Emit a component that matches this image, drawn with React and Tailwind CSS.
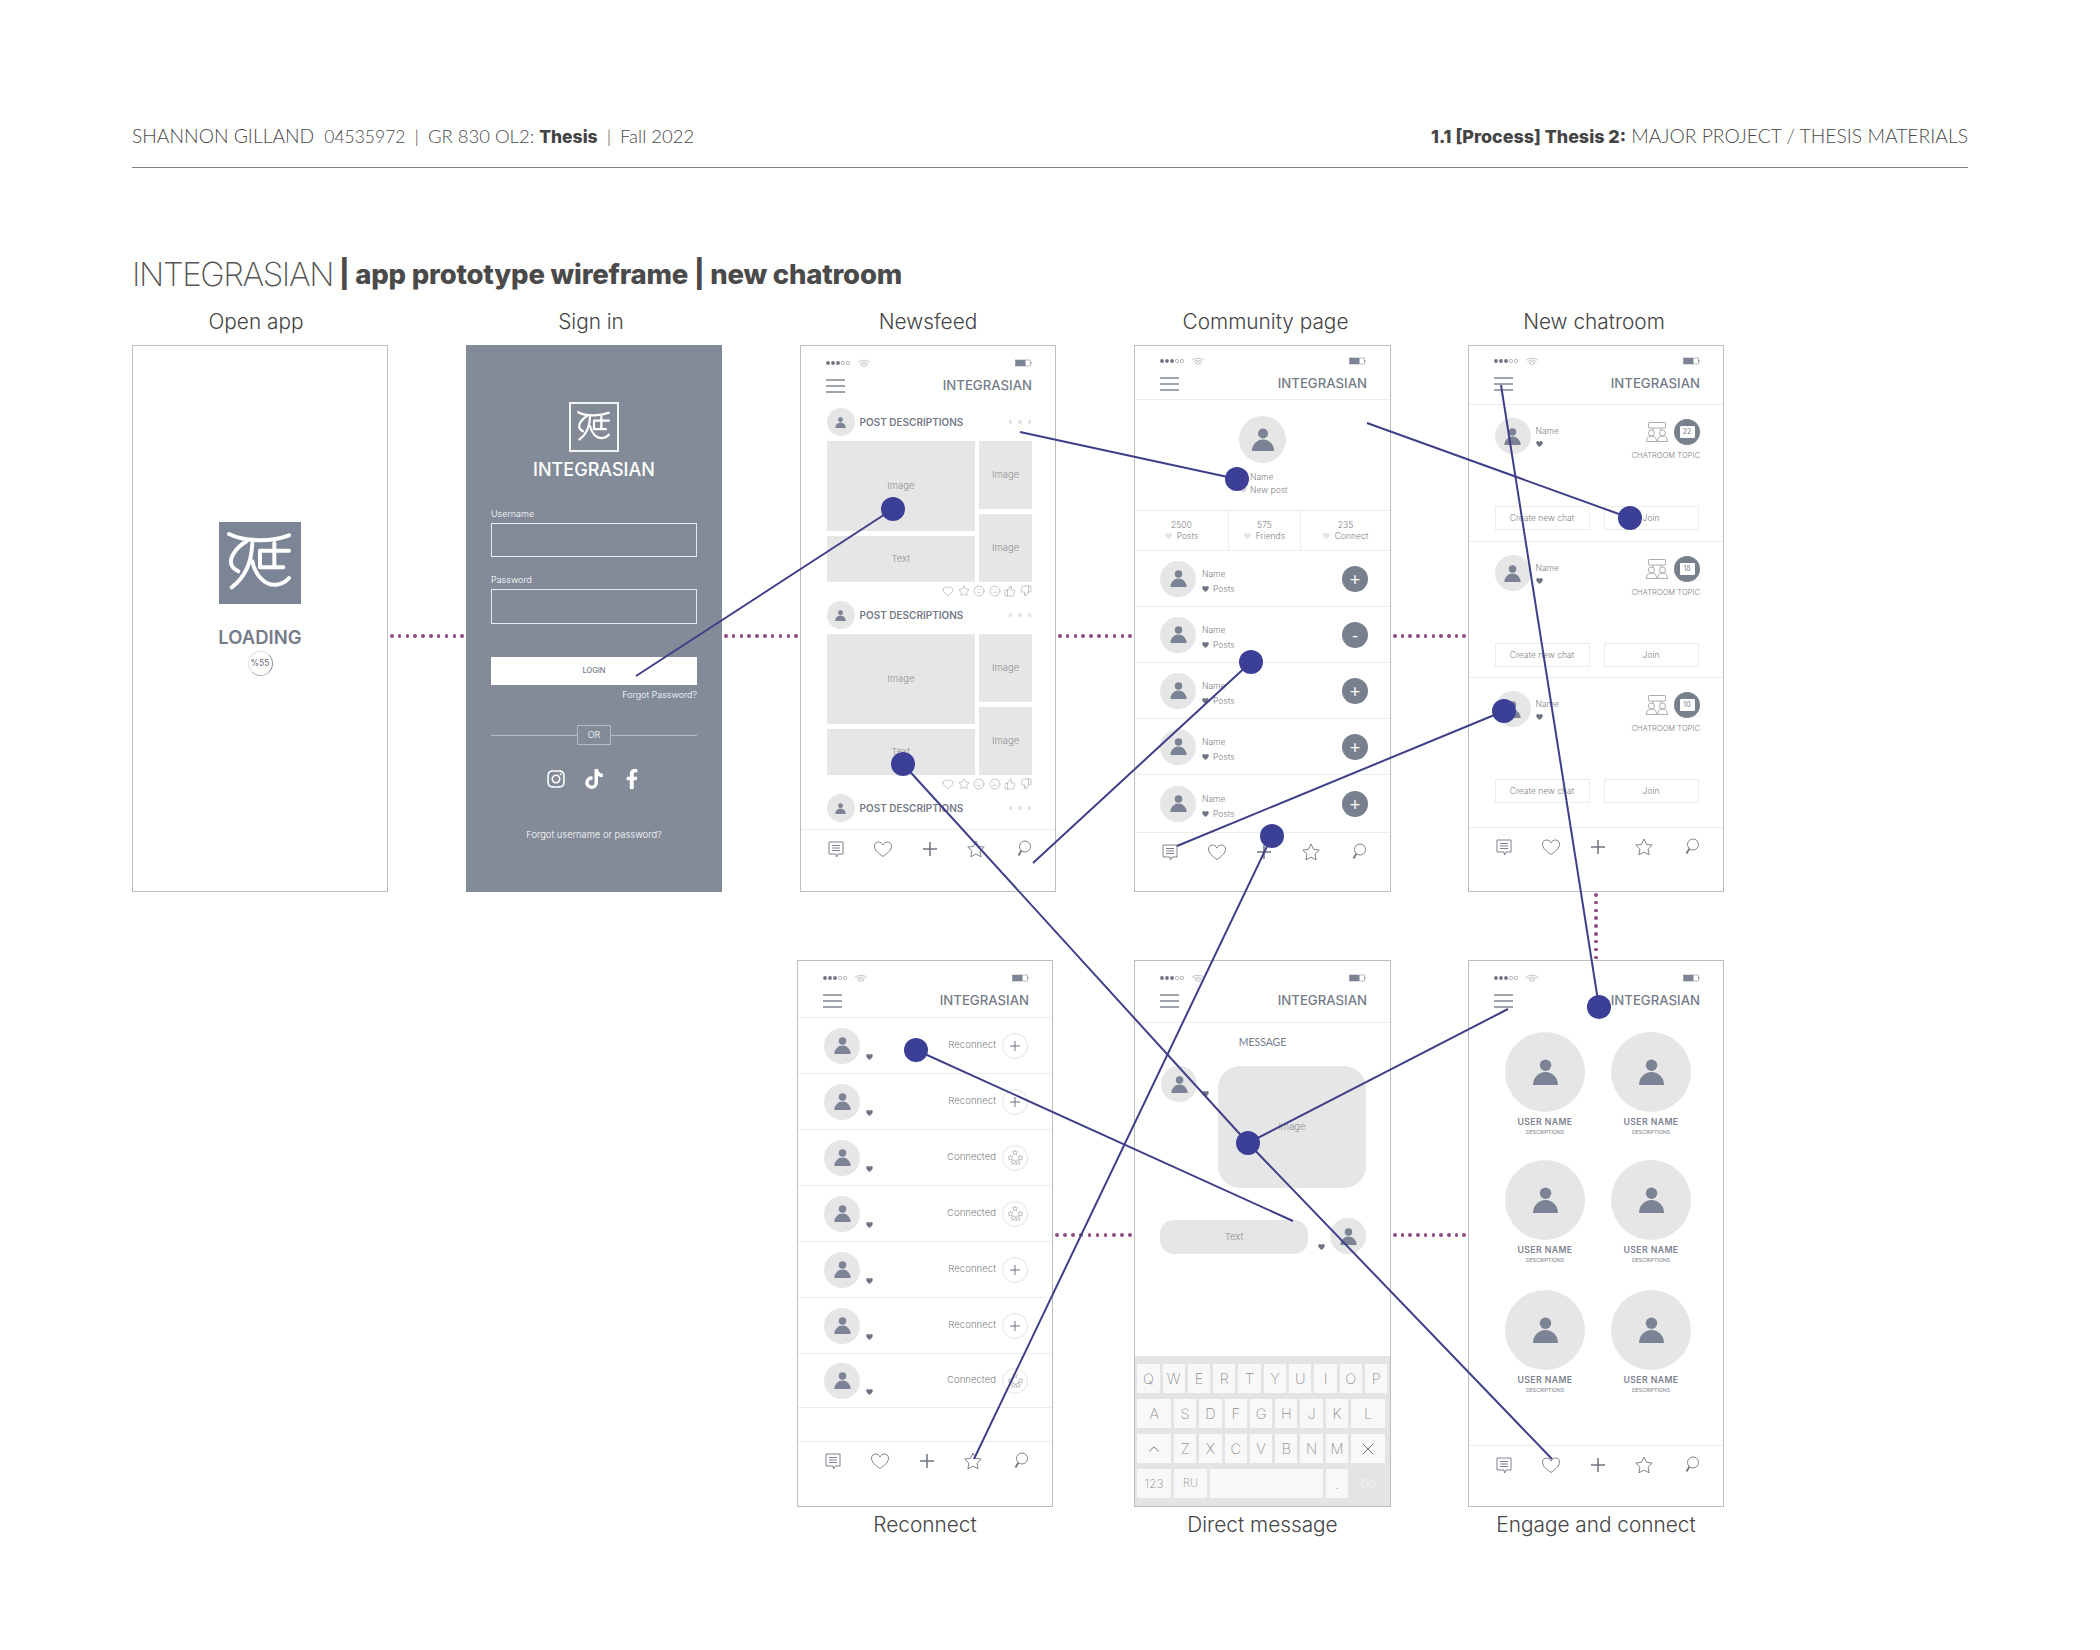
import React from "react";
import { Heart, Star, Smile, Frown, ThumbsUp, ThumbsDown, ChevronUp, X } from "lucide-react";
import { FaInstagram, FaTiktok, FaFacebookF } from "react-icons/fa";

const Glyph = ({ color = "#fff", className = "", sw = 12 }) => (
  <svg viewBox="12 12 246 246" className={className} fill="none" stroke={color} strokeWidth={sw} strokeLinecap="round" strokeLinejoin="round">
    <path d="M42 48C90 72 170 72 222 52" />
    <path d="M95 70C60 90 45 120 48 135C50 148 60 155 70 160" />
    <path d="M112 75C110 130 95 175 50 208" />
    <path d="M112 130C120 170 150 205 185 200C200 198 212 192 222 180" />
    <path d="M135 98H222M135 98V148H205M178 75V148" />
  </svg>
);

const Person = ({ className = "", fill = "#7b8394" }) => (
  <svg viewBox="0 0 24 25" className={className} fill={fill}>
    <circle cx="12" cy="6" r="5.5" />
    <path d="M0 25a12 12.5 0 0 1 24 0z" />
  </svg>
);

const Avatar = ({ box, icon }) => (
  <div className={`${box} shrink-0 rounded-full bg-[#e6e6e6] flex items-center justify-center`}>
    <Person className={icon} />
  </div>
);

const Burger = () => (
  <div className="w-[19px] flex flex-col gap-[4.5px]">
    <div className="h-[1.5px] bg-[#a0a4ab]" />
    <div className="h-[1.5px] bg-[#a0a4ab]" />
    <div className="h-[1.5px] bg-[#a0a4ab]" />
  </div>
);

const Status = () => (
  <svg width="206" height="8" viewBox="0 0 206 8" fill="none">
    <circle cx="2" cy="4" r="1.9" fill="#6f7480" />
    <circle cx="7" cy="4" r="1.9" fill="#6f7480" />
    <circle cx="12" cy="4" r="1.9" fill="#6f7480" />
    <circle cx="17" cy="4" r="1.7" stroke="#8a8f98" strokeWidth=".6" />
    <circle cx="22" cy="4" r="1.7" stroke="#8a8f98" strokeWidth=".6" />
    <path d="M32 3Q38 -.5 44 3M33.5 4.5Q38 1.5 42.5 4.5M35 6Q38 3.5 41 6L38 8z" stroke="#a0a4ab" strokeWidth=".6" />
    <rect x="189.5" y="1" width="15" height="6" stroke="#8a8f98" strokeWidth=".6" />
    <rect x="189.5" y="1" width="10" height="6" fill="#7b8394" />
    <path d="M205 3v2" stroke="#8a8f98" />
  </svg>
);

const Header = ({ className }) => (
  <div className={`${className} shrink-0 pl-[25px] pr-[23px] flex flex-col`}>
    <div className="h-[12px] flex items-center"><Status /></div>
    <div className="mt-[9px] h-[16px] flex items-center justify-between">
      <Burger />
      <span className="font-['Inter'] font-medium text-[13.2px] text-[#757c88]">INTEGRASIAN</span>
    </div>
  </div>
);

const Nav = ({ className }) => (
  <div className={`${className} mt-auto shrink-0 border-t-[1.5px] border-[#ececec] pl-[25px] pr-[22px] pt-[9px] flex items-start justify-between`}>
    <svg width="20" height="20" viewBox="0 0 20 20" fill="none" stroke="#6f7480" strokeWidth=".9" strokeLinejoin="round">
      <path d="M3 3h14v12h-5l-1.5 3-.5-3H3z" />
      <path d="M6 6.5h8M6 9h8M6 11.5h8" />
    </svg>
    <svg width="20" height="20" viewBox="0 0 20 20" fill="none" stroke="#6f7480" strokeWidth=".9" strokeLinejoin="round">
      <path d="M10 17.5C5 14 1.500 11 1.500 7C1.500 4.500 3.500 3 5.500 3C7.500 3 9 4 10 6C11 4 12.500 3 14.500 3C16.500 3 18.500 4.500 18.500 7C18.500 11 15 14 10 17.500z" />
    </svg>
    <svg width="20" height="20" viewBox="0 0 20 20" fill="none" stroke="#6f7480" strokeWidth="1.500">
      <path d="M10 3v14M3 10h14" />
    </svg>
    <svg width="20" height="20" viewBox="0 0 20 20" fill="none" stroke="#6f7480" strokeWidth=".9" strokeLinejoin="round">
      <path d="M10 2l2.500 5.300 5.700.8-4.100 4 1 5.700-5.100-2.700-5.100 2.700 1-5.700-4.100-4 5.700-.8z" />
    </svg>
    <svg width="20" height="20" viewBox="0 0 20 20" fill="none" stroke="#6f7480">
      <circle cx="12" cy="7.500" r="5.500" strokeWidth=".9" />
      <path d="M8.300 11.800L5.500 16.500" strokeWidth="1.800" />
    </svg>
  </div>
);

const Phone = ({ children }) => (
  <div className="w-full h-[547px] border border-[#bdbdbd] bg-white flex flex-col overflow-hidden">{children}</div>
);

const Column = ({ label, children, below, labelClass = "", width = "w-[256px]" }) => (
  <div className={`${width} shrink-0 flex flex-col`}>
    {!below && <div className={`h-[24px] mb-[11px] -mt-[1px] flex items-center justify-center font-['Inter'] font-light text-[20.800px] text-[#444] ${labelClass}`}>{label}</div>}
    {children}
    {below && <div className={`h-[24px] mt-[6px] flex items-center justify-center font-['Inter'] font-light text-[20.800px] text-[#444] ${labelClass}`}>{label}</div>}
  </div>
);

const Dots = ({ width, count, top }) => (
  <div className={`${width} ${top} shrink-0 self-start h-[4px] px-[2px] flex items-center justify-between`}>
    {Array.from({ length: count }).map((_, i) => (
      <span key={i} className="w-[3.5px] h-[3.5px] rounded-full bg-[#8f4a80]" />
    ))}
  </div>
);

const Img = ({ className, label }) => (
  <div className={`${className} bg-[#e6e6e6] flex items-center justify-center font-['Inter'] font-light text-[9.5px] text-[#909090]`}>{label}</div>
);

const PostHead = () => (
  <div className="h-[28px] flex items-center">
    <Avatar box="w-[28px] h-[28px]" icon="w-[11px] h-[11px]" />
    <span className="ml-[5px] font-['Inter'] font-semibold text-[10px] text-[#747b87]">POST DESCRIPTIONS</span>
    <div className="ml-auto flex gap-[6px] pr-[1px]">
      <i className="w-[3.5px] h-[3.5px] rounded-full bg-[#e2e2e2]" />
      <i className="w-[3.5px] h-[3.5px] rounded-full bg-[#e2e2e2]" />
      <i className="w-[3.5px] h-[3.5px] rounded-full bg-[#e2e2e2]" />
    </div>
  </div>
);

const Post = ({ first }) => (
  <div className={first ? "mt-[14px]" : "mt-[4px]"}>
    <PostHead />
    <div className="mt-[5px] flex gap-[4px]">
      <div className="w-[149px] flex flex-col gap-[5px]">
        <Img className="h-[90px]" label="Image" />
        <Img className="h-[46px]" label="Text" />
      </div>
      <div className="w-[53px] flex flex-col gap-[5px]">
        <Img className="h-[68px]" label="Image" />
        <Img className="h-[68px]" label="Image" />
      </div>
    </div>
    <div className="mt-[3px] h-[12px] flex justify-end gap-[3.600px] text-[#8f8f8f]">
      <Heart size={12} strokeWidth={1} />
      <Star size={12} strokeWidth={1} />
      <Smile size={12} strokeWidth={1} />
      <Frown size={12} strokeWidth={1} />
      <ThumbsUp size={12} strokeWidth={1} />
      <ThumbsDown size={12} strokeWidth={1} />
    </div>
  </div>
);

const TinyHeart = ({ className = "", color = "#6f7480" }) => (
  <svg viewBox="0 0 12 11" className={`w-[7px] h-[6px] shrink-0 ${className}`} fill={color}>
    <path d="M6 11C2 8 0 6 0 3.300C0 1.300 1.500 0 3.200 0C4.400 0 5.400.6 6 1.800C6.600.6 7.600 0 8.800 0C10.500 0 12 1.300 12 3.300C12 6 10 8 6 11z" />
  </svg>
);

const Stat = ({ n, label, className }) => (
  <div className={`${className} h-full flex flex-col items-center justify-center font-['Inter'] font-light text-[8.500px] leading-[11px] text-[#7f7f7f]`}>
    <span>{n}</span>
    <span className="flex items-center gap-[5px]"><TinyHeart color="#e3e3e3" />{label}</span>
  </div>
);

const FriendRow = ({ sign, className }) => (
  <div className={`${className} shrink-0 pl-[25px] pr-[22px] flex items-center`}>
    <Avatar box="w-[36px] h-[36px]" icon="w-[17px] h-[17px]" />
    <div className="ml-[6px] pt-[6px] flex flex-col gap-[4px] font-['Inter'] font-light text-[8.500px] leading-[11px] text-[#7f7f7f]">
      <span>Name</span>
      <span className="flex items-center gap-[4px]"><TinyHeart />Posts</span>
    </div>
    <div className="ml-auto w-[26px] h-[26px] rounded-full bg-[#78808e] flex items-center justify-center text-white font-['Lato'] text-[18px] leading-none">{sign}</div>
  </div>
);

const Group = () => (
  <svg width="22" height="20" viewBox="0 0 22 20" fill="none" stroke="#8a8a8a" strokeWidth=".7">
    <rect x="2.500" y=".5" width="17" height="5.500" rx=".8" />
    <path d="M7 6v2M15 6v2" />
    <circle cx="5.500" cy="11" r="3" />
    <circle cx="16.500" cy="11" r="3" />
    <path d="M.5 19.500q0-5.500 5-5.500t5 5.500zM11.500 19.500q0-5.500 5-5.500t5 5.500z" />
  </svg>
);

const ChatRow = ({ n, className }) => (
  <div className={`${className} shrink-0 pl-[25.500px] pr-[23px] pt-[13px]`}>
    <div className="h-[88px] flex">
      <Avatar box="w-[36px] h-[36px]" icon="w-[17px] h-[17px]" />
      <div className="ml-[5px] pt-[8px] flex flex-col gap-[4px] font-['Inter'] font-light text-[8.500px] leading-[11px] text-[#7f7f7f]">
        <span>Name</span>
        <TinyHeart />
      </div>
      <div className="ml-auto pt-[1px] flex flex-col items-end">
        <div className="flex items-center gap-[6px]">
          <Group />
          <div className="relative w-[26px] h-[26px] rounded-full bg-[#78808e] flex items-center justify-center">
            <span className="w-[15px] h-[12px] rounded-[1px] bg-white flex items-center justify-center font-['Inter'] text-[7px] text-[#78808e]">{n}</span>
          </div>
        </div>
        <span className="mt-[6px] font-['Inter'] font-light text-[7.600px] leading-[10px] text-[#7f7f7f]">CHATROOM TOPIC</span>
      </div>
    </div>
    <div className="flex gap-[14px] font-['Inter'] font-light text-[8.500px] text-[#7f7f7f]">
      <div className="w-[95px] h-[24px] border border-[#ececec] flex items-center justify-center">Create new chat</div>
      <div className="w-[95px] h-[24px] border border-[#ececec] flex items-center justify-center">Join</div>
    </div>
  </div>
);

const MiniStar = ({ x, y }) => (
  <path transform={`translate(${x} ${y})`} d="M2.500 0l.7 1.600 1.800.2-1.300 1.200.4 1.800-1.600-.9-1.600.9.4-1.800L0 1.800l1.800-.2z" />
);

const Stars = () => (
  <svg width="17" height="15" viewBox="0 0 17 15" fill="none" stroke="#8d8d8d" strokeWidth=".5">
    <MiniStar x={5.500} y={0} />
    <MiniStar x={1} y={5} />
    <MiniStar x={11} y={5} />
    <MiniStar x={4} y={9.500} />
    <MiniStar x={8.500} y={9.500} />
  </svg>
);

const ReconnectRow = ({ label, connected, className }) => (
  <div className={`${className} shrink-0 pl-[26px] pr-[24px] flex items-center`}>
    <Avatar box="w-[36px] h-[36px]" icon="w-[17px] h-[17px]" />
    <TinyHeart className="ml-[6px] mt-[22px]" />
    <span className="ml-auto font-['Inter'] font-light text-[9.600px] text-[#808080]">{label}</span>
    <div className="ml-[6px] w-[26px] h-[26px] rounded-full border border-[#e4e4e4] flex items-center justify-center text-[#6f7480]">
      {connected ? <Stars /> : (
        <svg width="12" height="12" viewBox="0 0 12 12" stroke="#6f7480" strokeWidth="1"><path d="M6 1v10M1 6h10" /></svg>
      )}
    </div>
  </div>
);

const keyClass = "h-[29px] bg-[#f8f8f8] flex items-center justify-center font-['Inter'] font-extralight text-[14.500px] text-[#8f8f8f]";

const Keys = ({ row }) => row.map((k) => (
  <div key={k} className={`w-[22.300px] ${keyClass}`}>{k}</div>
));

const Keyboard = () => (
  <div className="mt-auto h-[150px] shrink-0 bg-[#e4e4e4] pl-[2.300px] pr-[2px] pt-[8px] flex flex-col gap-[6px]">
    <div className="flex gap-[3px]"><Keys row={["Q", "W", "E", "R", "T", "Y", "U", "I", "O", "P"]} /></div>
    <div className="flex gap-[3px]">
      <div className={`w-[33.700px] ${keyClass}`}>A</div>
      <Keys row={["S", "D", "F", "G", "H", "J", "K"]} />
      <div className={`w-[34px] ${keyClass}`}>L</div>
    </div>
    <div className="flex gap-[3px]">
      <div className={`w-[33.700px] ${keyClass}`}><ChevronUp size={18} strokeWidth={1} color="#555" /></div>
      <Keys row={["Z", "X", "C", "V", "B", "N", "M"]} />
      <div className={`w-[34px] ${keyClass}`}><X size={20} strokeWidth={1} color="#555" /></div>
    </div>
    <div className="flex gap-[3px]">
      <div className={`w-[33.700px] ${keyClass} !text-[12px]`}>123</div>
      <div className={`w-[33px] ${keyClass} !text-[11px]`}>RU</div>
      <div className={`w-[113px] ${keyClass}`} />
      <div className={`w-[22.300px] ${keyClass}`}>.</div>
      <div className="w-[34px] h-[29px] flex items-center justify-center font-['Inter'] font-light text-[12px] text-[#f2f2f2]">Go</div>
    </div>
  </div>
);

const UserCard = () => (
  <div className="w-[80px] flex flex-col items-center">
    <Avatar box="w-[80px] h-[80px]" icon="w-[25px] h-[26px]" />
    <span className="mt-[5px] whitespace-nowrap font-['Inter'] font-semibold text-[8.700px] leading-[11px] tracking-[0.4px] text-[#7c8290]">USER NAME</span>
    <span className="whitespace-nowrap font-['Inter'] font-medium text-[5.200px] leading-[8px] text-[#8a8f98]">DESCRIPTIONS</span>
  </div>
);

export default function App() {
  return (
    <div className="relative w-[2100px] h-[1650px] bg-white overflow-hidden pl-[132px] font-['Lato']">
      <div className="w-[1836px] pt-[122px] h-[168px] border-b-[1.500px] border-[#808080] flex justify-between text-[#4a4a4a] text-[19.300px] leading-[28px] font-light">
        <div><span>SHANNON GILLAND</span><span className="ml-[10px] text-[17.500px]">04535972</span><span className="ml-[9px] text-[18.500px]">|</span><span className="ml-[9px] text-[18.500px]">GR 830 OL2: </span><b className="font-extrabold font-['Inter'] text-[17.500px] text-[#444]">Thesis</b><span className="ml-[9px] text-[18.500px]">|</span><span className="ml-[9px] text-[18.500px]">Fall 2022</span></div>
        <div><b className="font-extrabold font-['Inter'] text-[17.900px] text-[#444]">1.1 [Process] Thesis 2:</b> MAJOR PROJECT / THESIS MATERIALS</div>
      </div>

      <div className="mt-[87px] h-[40px] flex items-center text-[#4a4a4a]">
        <span className="font-['Inter'] font-extralight text-[33px] tracking-[-1.400px] text-[#555]">INTEGRASIAN</span>
        <span className="ml-[6px] font-['Inter'] font-extrabold text-[27.500px] tracking-[-0.200px]">| app prototype wireframe | new chatroom</span>
      </div>

      <div className="mt-[16px] flex items-start">
        <Column label="Open app" labelClass="pr-[8px]">
          <Phone>
            <div className="pt-[176px] flex flex-col items-center">
              <div className="w-[82px] h-[82px] bg-[#7c8596] flex items-center justify-center">
                <Glyph className="w-[82px] h-[82px]" />
              </div>
              <span className="mt-[24px] h-[18px] leading-[18px] font-['Inter'] font-semibold text-[18.500px] text-[#757c88]">LOADING</span>
              <div className="mt-[5px] w-[25px] h-[25px] rounded-full border border-[#e0e0e0] border-r-[#8a8f98] border-b-[#b0b0b0] flex items-center justify-center font-['Inter'] font-medium text-[8.500px] text-[#6f7480]">%55</div>
            </div>
          </Phone>
        </Column>
        <Dots width="w-[78px]" count={10} top="mt-[323px]" />
        <Column label="Sign in" labelClass="pr-[6px]">
          <div className="h-[547px] bg-[#838b99] flex flex-col items-center text-white">
            <div className="mt-[57px] w-[50px] h-[50px] border-2 border-[#f4f4f4] flex items-center justify-center">
              <Glyph className="w-[42px] h-[42px]" sw={13} />
            </div>
            <div className="mt-[8px] h-[20px] leading-[20px] font-['Inter'] font-medium text-[18px]">INTEGRASIAN</div>
            <div className="w-[206px] mt-[28px] flex flex-col font-['Inter'] font-light text-[9px] leading-[12px]">
              <span>Username</span>
              <div className="mt-[3px] h-[34px] border border-[#e8eaf0]" />
              <span className="mt-[17px]">Password</span>
              <div className="mt-[3px] h-[35px] border border-[#e8eaf0]" />
              <div className="mt-[33px] h-[28px] bg-white flex items-center justify-center font-['Inter'] font-medium text-[7.500px] text-[#777e8a]">LOGIN</div>
              <span className="mt-[4px] text-right">Forgot Password?</span>
              <div className="mt-[24px] h-[20px] flex items-center">
                <div className="flex-1 h-[1px] bg-[#b5bac4]" />
                <div className="w-[34px] h-[20px] border border-[#b5bac4] flex items-center justify-center text-[9px]">OR</div>
                <div className="flex-1 h-[1px] bg-[#b5bac4]" />
              </div>
            </div>
            <div className="mt-[24px] flex gap-[18px] text-[20px] leading-none">
              <FaInstagram />
              <FaTiktok />
              <FaFacebookF />
            </div>
            <span className="mt-[40px] font-['Inter'] font-light text-[9.400px] leading-[12px]">Forgot username or password?</span>
          </div>
        </Column>
        <Dots width="w-[78px]" count={10} top="mt-[323px]" />
        <Column label="Newsfeed">
          <Phone>
            <Header className="pt-[11px]" />
            <div className="pl-[25.500px] pr-[23px]">
              <Post first />
              <Post />
              <div className="mt-[4px]"><PostHead /></div>
            </div>
            <Nav className="h-[62px]" />
          </Phone>
        </Column>
        <Dots width="w-[78px]" count={10} top="mt-[323px]" />
        <Column label="Community page" width="w-[257px]" labelClass="pl-[6px]">
          <Phone>
            <Header className="pt-[9px] h-[54px] border-b-[1.500px] border-[#ececec]" />
            <div className="h-[111px] shrink-0 pt-[16px] flex flex-col items-center border-b-[1.500px] border-[#ececec]">
              <Avatar box="w-[47px] h-[47px]" icon="w-[22px] h-[23px]" />
              <div className="w-full pl-[105px] mt-[8px] font-['Inter'] font-light text-[8.500px] leading-[12.500px] text-[#7f7f7f]">
                <div className="flex items-center gap-[3px]"><TinyHeart color="#ffffff" />Name</div>
                <div className="flex items-center gap-[3px]"><TinyHeart color="#d8d8d8" />New post</div>
              </div>
            </div>
            <div className="h-[40px] shrink-0 flex border-b-[1.500px] border-[#ececec]">
              <Stat n="2500" label="Posts" className="w-[94px] border-r border-[#ececec]" />
              <Stat n="575" label="Friends" className="w-[72px] border-r border-[#ececec]" />
              <Stat n="235" label="Connect" className="flex-1" />
            </div>
            <FriendRow sign="+" className="h-[56px] border-b-[1.500px] border-[#ececec]" />
            <FriendRow sign="-" className="h-[56px] border-b-[1.500px] border-[#ececec]" />
            <FriendRow sign="+" className="h-[56px] border-b-[1.500px] border-[#ececec]" />
            <FriendRow sign="+" className="h-[56px] border-b-[1.500px] border-[#ececec]" />
            <FriendRow sign="+" className="h-[57px]" />
            <Nav className="h-[59px]" />
          </Phone>
        </Column>
        <Dots width="w-[77px]" count={10} top="mt-[323px]" />
        <Column label="New chatroom" labelClass="pr-[4px]">
          <Phone>
            <Header className="pt-[9px] h-[59px] border-b-[1.500px] border-[#ececec]" />
            <ChatRow n="22" className="h-[137px] border-b-[1.500px] border-[#ececec]" />
            <ChatRow n="18" className="h-[136px] border-b-[1.500px] border-[#ececec]" />
            <ChatRow n="10" className="h-[149px]" />
            <Nav className="h-[64px]" />
          </Phone>
        </Column>
      </div>

      <div className="h-[68px] pl-[1462px] flex flex-col justify-between py-[1px] w-[1470px]">
        {Array.from({ length: 9 }).map((_, i) => (
          <span key={i} className="w-[3.500px] h-[3.500px] rounded-full bg-[#8f4a80]" />
        ))}
      </div>

      <div className="pl-[665px] flex items-start">
        <Column label="Reconnect" below>
          <Phone>
            <Header className="pt-[11px] h-[57px] border-b-[1.500px] border-[#ececec]" />
            <ReconnectRow label="Reconnect" className="h-[56px] border-b-[1.500px] border-[#ececec]" />
            <ReconnectRow label="Reconnect" className="h-[56px] border-b-[1.500px] border-[#ececec]" />
            <ReconnectRow label="Connected" connected className="h-[56px] border-b-[1.500px] border-[#ececec]" />
            <ReconnectRow label="Connected" connected className="h-[56px] border-b-[1.500px] border-[#ececec]" />
            <ReconnectRow label="Reconnect" className="h-[56px] border-b-[1.500px] border-[#ececec]" />
            <ReconnectRow label="Reconnect" className="h-[56px] border-b-[1.500px] border-[#ececec]" />
            <ReconnectRow label="Connected" connected className="h-[54px] border-b-[1.500px] border-[#ececec]" />
            <Nav className="h-[65px]" />
          </Phone>
        </Column>
        <Dots width="w-[81px]" count={10} top="mt-[273px]" />
        <Column label="Direct message" below width="w-[257px]">
          <Phone>
            <Header className="pt-[11px] h-[62px] border-b-[1.500px] border-[#ececec]" />
            <div className="mt-[13px] h-[12px] leading-[12px] text-center font-['Lato'] text-[10.500px] text-[#757c88]">MESSAGE</div>
            <div className="mt-[18px] pl-[26px] flex items-start">
              <Avatar box="w-[36px] h-[36px]" icon="w-[17px] h-[17px]" />
              <TinyHeart className="ml-[5px] mt-[25px]" />
              <Img className="ml-[9px] w-[148px] h-[122px] rounded-[22px]" label="Image" />
            </div>
            <div className="mt-[30px] pl-[25px] flex items-start">
              <Img className="mt-[2px] w-[148px] h-[34px] rounded-[14px]" label="Text" />
              <TinyHeart className="ml-[10px] mt-[26px]" />
              <div className="ml-[5px]"><Avatar box="w-[36px] h-[36px]" icon="w-[17px] h-[17px]" /></div>
            </div>
            <Keyboard />
          </Phone>
        </Column>
        <Dots width="w-[77px]" count={10} top="mt-[273px]" />
        <Column label="Engage and connect" below>
          <Phone>
            <Header className="pt-[11px]" />
            <div className="pt-[23px] pl-[36px] grid grid-cols-[80px_80px] gap-x-[26px] grid-rows-[128px_130px_80px]">
              <UserCard /><UserCard />
              <UserCard /><UserCard />
              <UserCard /><UserCard />
            </div>
            <Nav className="h-[61px]" />
          </Phone>
        </Column>
      </div>

      <svg className="absolute left-0 top-0 pointer-events-none" width="2100" height="1650" viewBox="0 0 2100 1650" fill="none" stroke="#3f3f88" strokeWidth="2">
        <path d="M636 676L893 509" />
        <path d="M1020 432L1237 479" />
        <path d="M1367 423L1630 518" />
        <path d="M1501 385L1599 1007" />
        <path d="M1508 1009L1248 1143" />
        <path d="M903 764L1248 1143L1552 1459" />
        <path d="M1033 863L1251 662" />
        <path d="M1177 846L1504 711" />
        <path d="M974 1459L1272 836" />
        <path d="M916 1050L1293 1221" />
        <g fill="#3c3f96" stroke="none">
          <circle cx="893" cy="509" r="12" />
          <circle cx="1237" cy="479" r="12" />
          <circle cx="1630" cy="518" r="12" />
          <circle cx="1599" cy="1007" r="12" />
          <circle cx="1248" cy="1143" r="12" />
          <circle cx="903" cy="764" r="12" />
          <circle cx="1251" cy="662" r="12" />
          <circle cx="1504" cy="711" r="12" />
          <circle cx="1272" cy="836" r="12" />
          <circle cx="916" cy="1050" r="12" />
        </g>
      </svg>
    </div>
  );
}
